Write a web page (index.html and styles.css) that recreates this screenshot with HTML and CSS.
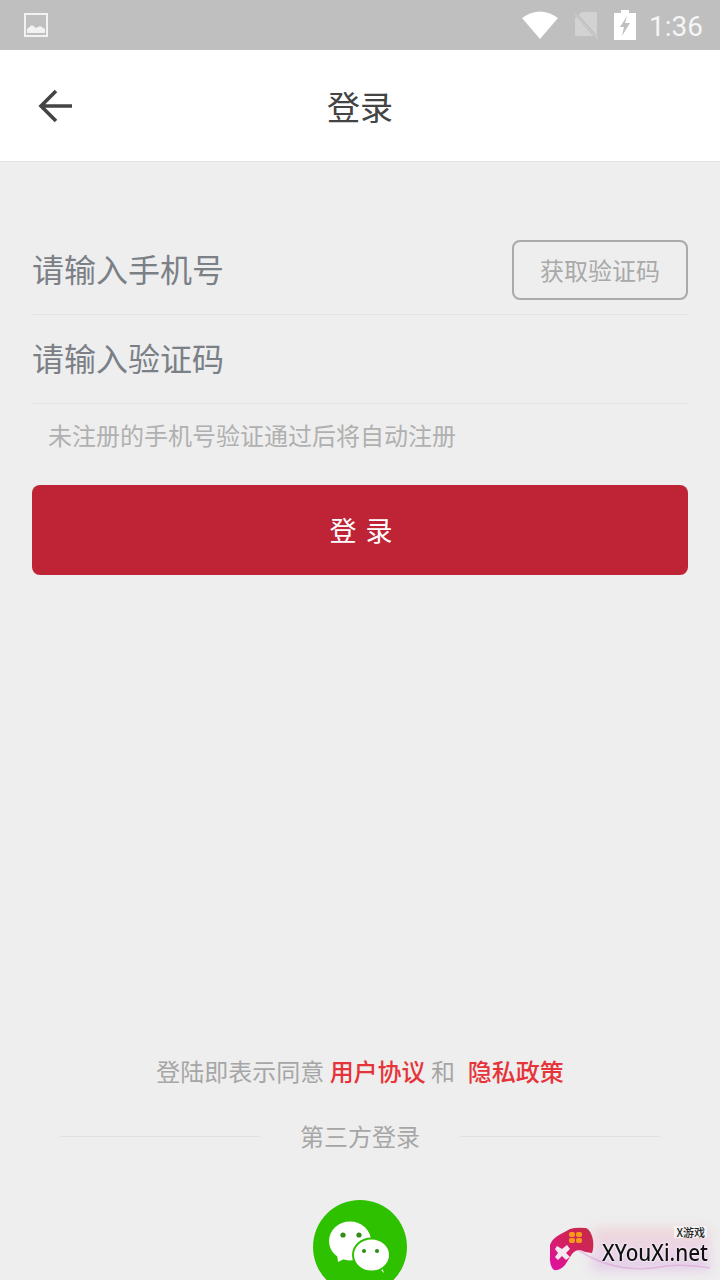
FILE: index.html
```html
<!DOCTYPE html>
<html lang="zh-CN">

<head>
    <meta http-equiv="Content-Type" content="text/html; charset=UTF-8" />
    <meta name="viewport" content="width=device-width, initial-scale=1.0">
    <title>登录</title>
    <link rel="stylesheet" href="styles.css">
</head>

<body>
    <div class="status-bar">
        <svg class="status-picture" width="24" height="24" viewBox="0 0 24 24">
            <rect x="1" y="1" width="22" height="22" fill="none" stroke="#f2f2f2" stroke-width="2" />
            <path d="M3 20 V16 L8 12 L12 15 L16 13 L21 16 V20 Z" fill="#f2f2f2" />
        </svg>
        <div class="status-right">
            <svg width="36" height="28" viewBox="0 0 36 28">
                <path d="M0 7 Q18 -6 36 7 L18 28 Z" fill="#ffffff" />
            </svg>
            <svg width="26" height="28" viewBox="0 0 26 28">
                <path d="M9 1 H24 V25 H2 V7 Z" fill="#d2d2d2" />
                <path d="M1 1 L25 28" stroke="#bfbfbf" stroke-width="3" />
                <path d="M2 3 L25 28" stroke="#d2d2d2" stroke-width="1" />
            </svg>
            <svg width="22" height="30" viewBox="0 0 22 30">
                <path d="M7 0 H15 V3 H22 V30 H0 V3 H7 Z" fill="#ffffff" />
                <path d="M13 6 L6 17 H10 L8 26 L16 13 H11 Z" fill="#bfbfbf" />
            </svg>
            <span class="status-time">1:36</span>
        </div>
    </div>

    <header class="title-bar">
        <svg class="back-icon" width="36" height="36" viewBox="0 0 36 36">
            <path d="M34 18 H5 M18 3 L3 18 L18 33" fill="none" stroke="#444444" stroke-width="3.6" />
        </svg>
        <h1 class="page-title">登录</h1>
    </header>

    <main class="login-form">
        <div class="form-row phone-row">
            <span class="field-hint">请输入手机号</span>
            <span class="code-button">获取验证码</span>
        </div>
        <div class="form-row code-row">
            <span class="field-hint">请输入验证码</span>
        </div>
        <p class="register-note">未注册的手机号验证通过后将自动注册</p>
        <div class="login-button">登录</div>
    </main>

    <footer class="login-footer">
        <p class="agreement">登陆即表示同意 <span class="agreement-link">用户协议</span> 和 &nbsp;<span class="agreement-link policy-link">隐私政策</span></p>
        <div class="third-party">
            <span class="third-line"></span>
            <span class="third-label">第三方登录</span>
            <span class="third-line"></span>
        </div>
        <svg class="wechat-icon" width="94" height="94" viewBox="0 0 94 94">
            <circle cx="47" cy="47" r="47" fill="#2dc100" />
            <path d="M24 54 L25 62 L35 57 Z" fill="#ffffff" />
            <ellipse cx="37" cy="41" rx="21" ry="19.5" fill="#ffffff" />
            <path d="M64 66 L71 73 L68 64 Z" fill="#ffffff" />
            <ellipse cx="58.5" cy="55" rx="18.5" ry="16.5" fill="#ffffff" stroke="#2dc100" stroke-width="2" />
            <circle cx="30" cy="35" r="2.6" fill="#2f8f14" />
            <circle cx="46" cy="35" r="2.6" fill="#2f8f14" />
            <circle cx="51" cy="51" r="2.1" fill="#2f8f14" />
            <circle cx="64" cy="51" r="2.1" fill="#2f8f14" />
        </svg>
    </footer>

    <!-- site watermark over the corner -->
    <div class="watermark">
        <div class="watermark-glow"></div>
        <svg class="watermark-pad" width="172" height="56" viewBox="0 0 172 56">
            <defs>
                <linearGradient id="padFill" x1="1" y1="0" x2="0" y2="1">
                    <stop offset="0" stop-color="#c42c46" />
                    <stop offset="0.5" stop-color="#d42060" />
                    <stop offset="1" stop-color="#e010a8" />
                </linearGradient>
            </defs>
            <path d="M30 26 Q70 52 118 42 Q140 40 162 44" fill="none" stroke="#d890d0" stroke-width="1.5" opacity="0.45" />
            <path d="M2 21 Q4 15 11 11 L22 5 Q28 3 38 4 Q43 6 45 16 Q46 24 44 29 Q38 29 32 26 Q27 26 24 30 L17 41 Q12 47 6 46 Q1 42 2 30 Z" fill="url(#padFill)" />
            <path d="M9 22 L14 25 L19 21 L22 25 L18 29 L22 33 L18 36 L14 32 L10 36 L7 33 L10 29 L7 25 Z" fill="#f6e8f0" />
            <rect x="21" y="8" width="6" height="5" rx="2" fill="#f59a1c" />
            <rect x="28" y="8" width="6" height="5" rx="2" fill="#f59a1c" />
            <rect x="21" y="14" width="6" height="5" rx="2" fill="#f59a1c" />
            <rect x="28" y="14" width="6" height="5" rx="2" fill="#f59a1c" />
        </svg>
        <span class="watermark-small">X游戏</span>
        <span class="watermark-name">XYouXi.net</span>
    </div>
</body>

</html>
```

FILE: styles.css
```css
body {
    background-color: #eeeeee;
    font-family: "Noto Sans CJK SC", "Noto Sans", sans-serif;
    margin: 0;
    padding: 0;
    width: 720px;
    height: 1280px;
    overflow: hidden;
    position: relative;
}

p,
h1 {
    margin: 0;
    font-weight: 400;
}

.status-bar {
    height: 50px;
    background-color: #bfbfbf;
    display: flex;
    align-items: center;
    justify-content: space-between;
    padding: 0 17px 0 24px;
    box-sizing: border-box;
}

.status-picture {
    display: block;
}

.status-right {
    display: flex;
    align-items: center;
    gap: 15px;
}

.status-right svg {
    display: block;
}

.status-time {
    font-family: Roboto, sans-serif;
    font-size: 28px;
    color: #f5f5f5;
    line-height: 50px;
    padding-top: 3px;
    margin-left: -2px;
}

.title-bar {
    height: 112px;
    box-sizing: border-box;
    background-color: #ffffff;
    border-bottom: 1px solid #e2e2e2;
    display: flex;
    align-items: center;
    justify-content: center;
    position: relative;
}

.back-icon {
    position: absolute;
    left: 38px;
    top: 38px;
}

.page-title {
    font-size: 33px;
    color: #444444;
    line-height: 112px;
}

.login-form {
    padding: 78px 32px 0;
}

.form-row {
    border-bottom: 1px solid #e3e3e3;
    display: flex;
    justify-content: space-between;
    box-sizing: border-box;
}

.phone-row {
    height: 75px;
}

.code-row {
    height: 89px;
    padding-top: 14px;
}

.field-hint {
    font-size: 32px;
    color: #7b8087;
    line-height: 56px;
}

.code-button {
    width: 176px;
    height: 60px;
    box-sizing: border-box;
    border: 2px solid #aaaaaa;
    border-radius: 8px;
    font-size: 24px;
    line-height: 56px;
    color: #a9a9a9;
    text-align: center;
}

.register-note {
    font-size: 24px;
    color: #b0b0b0;
    line-height: 62px;
    padding-left: 16px;
}

.login-button {
    margin-top: 19px;
    height: 90px;
    background-color: #bf2336;
    border-radius: 8px;
    color: #ffffff;
    font-size: 27px;
    line-height: 90px;
    letter-spacing: 9px;
    padding-left: 11px;
    text-align: center;
}

.login-footer {
    margin-top: 473px;
    display: flex;
    flex-direction: column;
    align-items: center;
}

.agreement {
    font-size: 24px;
    line-height: 46px;
    color: #a6a6a6;
}

.agreement-link {
    color: #e5343a;
    font-weight: 500;
}

.policy-link {
    margin-left: 2px;
}

.third-party {
    margin-top: 25px;
    width: 600px;
    display: flex;
    align-items: center;
    justify-content: space-between;
}

.third-line {
    width: 200px;
    height: 1px;
    background-color: #e0e0e0;
}

.third-label {
    font-size: 24px;
    line-height: 34px;
    color: #a6a6a6;
}

.wechat-icon {
    display: block;
    margin-top: 47px;
    flex-shrink: 0;
}

.watermark {
    position: absolute;
    left: 548px;
    top: 1224px;
    width: 172px;
    height: 56px;
}

.watermark-glow {
    position: absolute;
    left: 44px;
    top: 4px;
    width: 118px;
    height: 42px;
    background: linear-gradient(180deg, #ecc4c4, #ebc8e8 55%, #d8b0e0);
    filter: blur(6px);
    opacity: 0.6;
}

.watermark-pad {
    position: absolute;
    left: 0;
    top: 0;
}

.watermark-small {
    position: absolute;
    right: 13px;
    top: 2px;
    font-size: 11px;
    font-weight: 500;
    line-height: 12px;
    color: #222222;
    background-color: #f2f2f2;
    padding: 0 2px;
}

.watermark-name {
    position: absolute;
    left: 54px;
    top: 17px;
    font-family: "Noto Sans", sans-serif;
    font-size: 23px;
    font-weight: 500;
    line-height: 22px;
    color: #111111;
    text-shadow: 0 0 2px #ffffff, 0 0 2px #ffffff;
    white-space: nowrap;
    transform: scaleX(0.9);
    transform-origin: left center;
}
```
